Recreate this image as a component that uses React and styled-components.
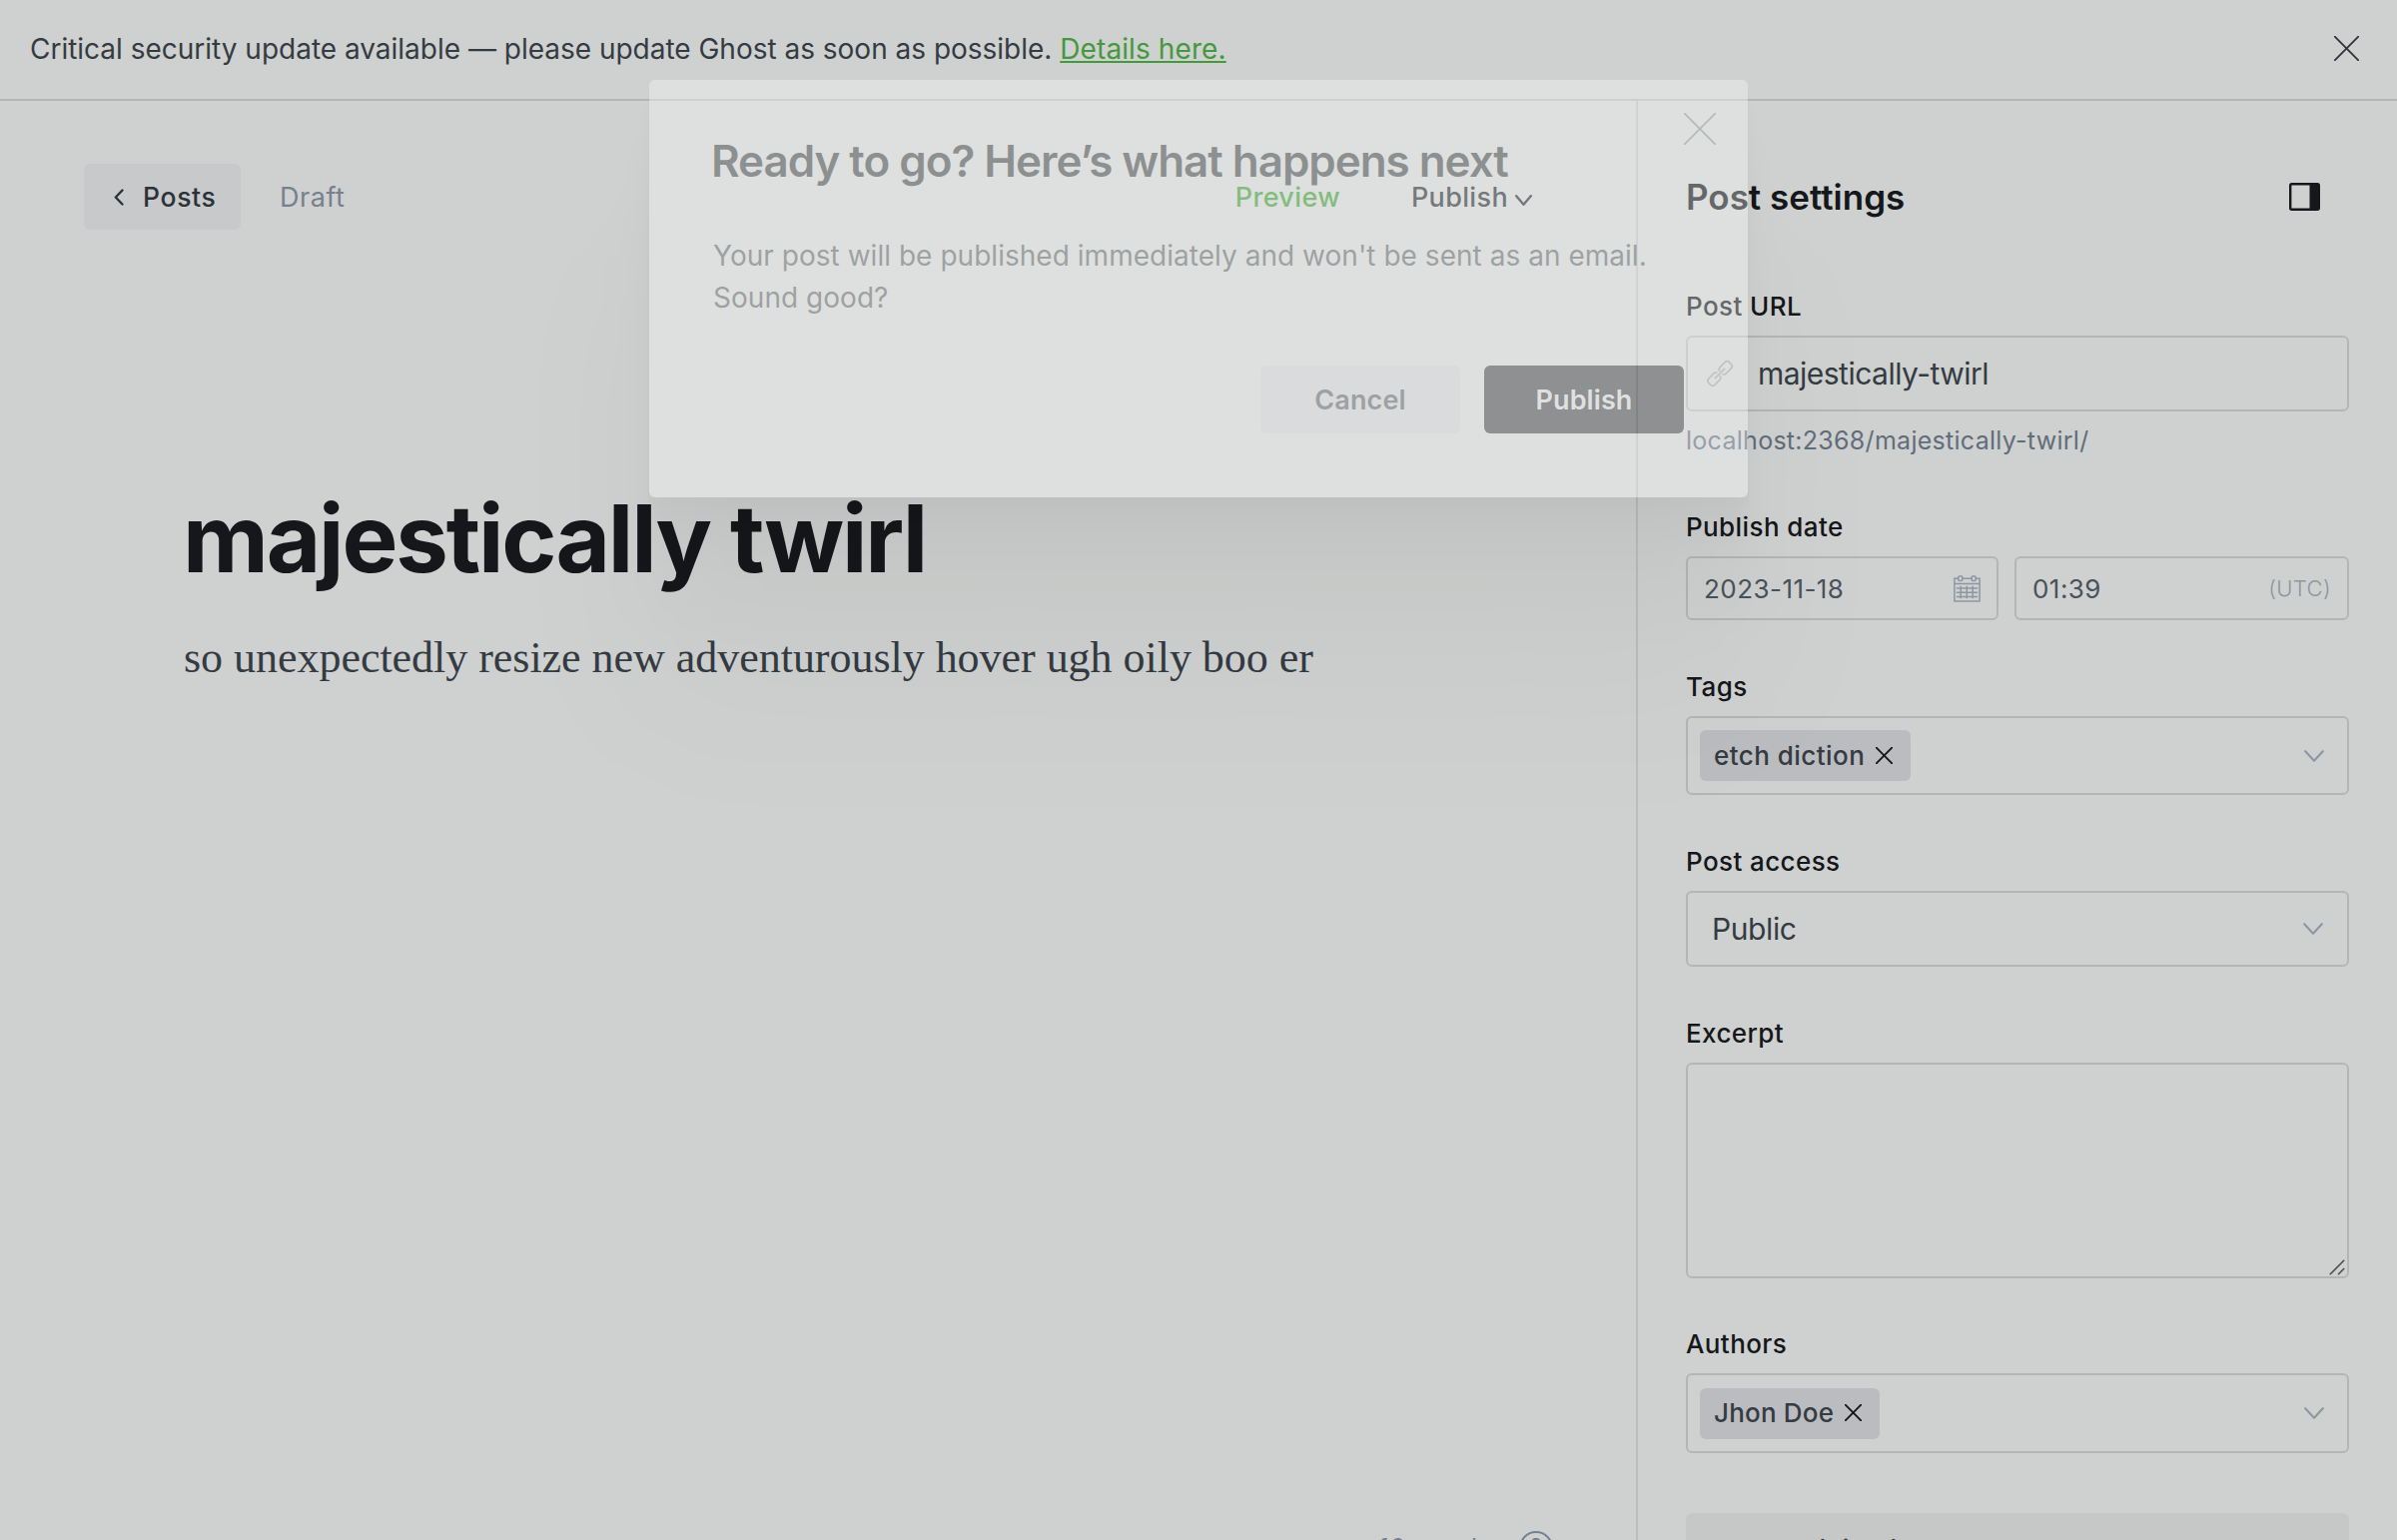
import React from 'react';
import styled, { createGlobalStyle } from 'styled-components';

const color = {
  page: '#ced1cf',
  line: '#b4b6b5',
  divider: '#bbbdbc',
  ink: '#15171a',
  text: '#353b42',
  value: '#4a525c',
  help: '#626d7c',
  muted: '#76808f',
  faint: '#8e96a1',
  green: '#46983c',
  pill: '#bbbcbf',
  button: '#c8c9cb',
  panel: '#c6c8c7',
};

const GlobalStyle = createGlobalStyle`
  * { box-sizing: border-box; }
  body {
    margin: 0;
    background: ${color.page};
    color: ${color.text};
    font-family: Inter, "Liberation Sans", sans-serif;
  }
  button, input, textarea { font-family: inherit; }
`;

const Viewport = styled.div`
  position: relative;
  width: 2400px;
  height: 1542px;
  overflow: hidden;
`;

const Page = styled.div`
  display: flex;
  flex-direction: column;
  height: 1600px;
`;

/* Update banner */
const Banner = styled.header`
  display: flex;
  align-items: center;
  justify-content: space-between;
  height: 101px;
  padding: 0 38px 1px 30px;
  border-bottom: 2px solid ${color.line};
  font-size: 28px;

  > svg { margin: 0 0 2px; }
`;

const BannerText = styled.p`
  margin: 0;
  letter-spacing: -0.01px;
  white-space: nowrap;
`;

const BannerLink = styled.a`
  color: ${color.green};
  letter-spacing: 0.1px;
  text-decoration: underline;
  text-decoration-thickness: 2px;
  text-underline-offset: 2px;
`;

const Main = styled.main`
  display: flex;
  flex: 1;
  min-height: 0;
`;

/* Editor column */
const Editor = styled.section`
  display: flex;
  flex-direction: column;
  width: 1638px;
`;

const EditorBar = styled.div`
  display: flex;
  align-items: center;
  height: 192px;
  padding: 0 104px 0 84px;
`;

const BackButton = styled.button`
  display: flex;
  align-items: center;
  gap: 19px;
  width: 157px;
  height: 66px;
  padding: 0 0 0 30px;
  border: 0;
  border-radius: 6px;
  background: ${color.button};
  color: #2c3238;
  font-size: 26.5px;
  font-weight: 500;
  letter-spacing: 0.65px;
`;

const Status = styled.span`
  margin-left: 39px;
  color: ${color.muted};
  font-size: 27px;
  letter-spacing: 0.55px;
`;

const BarActions = styled.div`
  display: flex;
  align-items: center;
  gap: 71px;
  margin-left: auto;
`;

const BarButton = styled.button`
  display: flex;
  align-items: center;
  gap: 7px;
  padding: 0;
  border: 0;
  background: none;
  color: ${(p) => (p.$accent ? color.green : '#2f3338')};
  font-size: 27px;
  font-weight: 500;
  letter-spacing: 0.35px;

  svg { margin-top: 7px; }
`;

const Document = styled.article`
  flex: 1;
  padding: 191px 183px 0 184px;
`;

const DocTitle = styled.h1`
  margin: 0 0 34px -1px;
  color: ${color.ink};
  font-size: 94px;
  font-weight: 700;
  line-height: 110px;
  letter-spacing: -2.15px;
`;

const DocBody = styled.p`
  margin: 0;
  font-family: "Liberation Serif", serif;
  font-size: 44px;
  line-height: 61px;
  letter-spacing: -0.03px;
  white-space: nowrap;
`;

const EditorFooter = styled.footer`
  display: flex;
  align-items: center;
  justify-content: flex-end;
  gap: 27px;
  height: 101px;
  padding-right: 83px;
  color: ${color.muted};
  font-size: 26px;
  letter-spacing: 0.5px;
`;

const HelpBadge = styled.span`
  display: flex;
  align-items: center;
  justify-content: center;
  width: 34px;
  height: 34px;
  border: 2px solid ${color.muted};
  border-radius: 50%;
  font-size: 24px;
  letter-spacing: 0;
`;

/* Settings column */
const Sidebar = styled.aside`
  display: flex;
  flex-direction: column;
  width: 762px;
  padding: 0 48px;
  border-left: 2px solid ${color.divider};
`;

const SidebarBar = styled.div`
  display: flex;
  align-items: center;
  justify-content: space-between;
  height: 191px;
  padding: 1px 29px 0 0;
  flex: none;
`;

const SidebarTitle = styled.h2`
  margin: 0;
  color: ${color.ink};
  font-size: 35px;
  font-weight: 600;
  letter-spacing: 0;
`;

const Field = styled.div`
  flex: none;
  margin-bottom: ${(p) => p.$after || 52}px;
`;

const Label = styled.label`
  display: block;
  margin-bottom: 15px;
  color: ${color.ink};
  font-size: 26px;
  font-weight: 500;
  line-height: 29px;
  letter-spacing: 0.4px;
`;

const Box = styled.div`
  display: flex;
  align-items: center;
  height: ${(p) => p.$h}px;
  width: ${(p) => (p.$w ? `${p.$w}px` : 'auto')};
  padding: ${(p) => p.$pad || '0'};
  border: 2px solid ${color.line};
  border-radius: 6px;
`;

const BigValue = styled.span`
  margin-left: ${(p) => p.$left || 0}px;
  font-size: 30px;
  letter-spacing: ${(p) => p.$track}px;
`;

const Help = styled.p`
  margin: 14px 0 0;
  color: ${color.help};
  font-size: 25px;
  line-height: 30px;
  letter-spacing: 0.28px;
`;

const Split = styled.div`
  display: flex;
  justify-content: space-between;
`;

const SmallValue = styled.span`
  color: ${color.value};
  font-size: 26px;
  letter-spacing: 0.45px;
`;

const Zone = styled.span`
  color: ${color.faint};
  font-size: 22px;
  font-weight: 300;
  letter-spacing: 0.4px;
`;

const Token = styled.span`
  display: flex;
  align-items: center;
  gap: 11px;
  height: 51px;
  padding: 0 18px 1px 14px;
  border-radius: 6px;
  background: ${color.pill};
  color: ${color.text};
  font-size: 26px;
  font-weight: 500;
  letter-spacing: ${(p) => p.$track}px;
`;

const Push = styled.span`
  display: flex;
  margin-left: auto;
`;

const Excerpt = styled.div`
  display: flex;
  align-items: flex-end;
  justify-content: flex-end;
  height: 216px;
  padding: 0 2px 1px 0;
  border: 2px solid ${color.line};
  border-radius: 6px;
`;

const MenuItem = styled.button`
  flex: none;
  height: 85px;
  padding: 0 0 12px 58px;
  border: 0;
  border-radius: 6px 6px 0 0;
  background: ${color.panel};
  color: ${color.text};
  font-size: 26px;
  font-weight: 500;
  letter-spacing: 0.5px;
  text-align: left;
`;

/* Dialog, caught partway through its fade */
const Overlay = styled.div`
  position: absolute;
  inset: 0;
  display: flex;
  justify-content: center;
  align-items: flex-start;
  padding-top: 80px;
`;

const Dialog = styled.div`
  position: relative;
  width: 1100px;
  height: 418px;
  padding: 55px 64px 64px 64px;
  border-radius: 6px;
  background: #fdfffe;
  opacity: 0.345;
  box-shadow:
    0 8px 5px rgba(0, 0, 0, 0.02),
    0 18px 11px rgba(0, 0, 0, 0.028),
    0 35px 20px rgba(0, 0, 0, 0.035),
    0 62px 36px rgba(0, 0, 0, 0.035),
    0 115px 67px rgba(0, 0, 0, 0.045),
    0 200px 145px rgba(0, 0, 0, 0.07);
`;

const DialogTitle = styled.h3`
  margin: 0 0 48px -2px;
  color: ${color.ink};
  font-size: 44px;
  font-weight: 600;
  line-height: 52px;
  letter-spacing: -1.05px;
  white-space: nowrap;
`;

const DialogText = styled.p`
  margin: 0 0 47px;
  color: #45484f;
  font-size: 28px;
  line-height: 42px;
  letter-spacing: 0.03px;
  white-space: nowrap;
`;

const DialogActions = styled.div`
  display: flex;
  justify-content: flex-end;
  gap: 24px;
`;

const DialogButton = styled.button`
  width: 200px;
  height: 68px;
  padding: 0;
  border: 0;
  border-radius: 6px;
  background: ${(p) => (p.$primary ? '#16171d' : '#eeeff5')};
  color: ${(p) => (p.$primary ? '#fff' : '#45484f')};
  font-size: 27px;
  font-weight: 600;
  letter-spacing: 0.1px;
`;

const DialogClose = styled.span`
  position: absolute;
  top: 33px;
  right: 32px;
  display: flex;
`;

function Cross({ size, stroke, width }) {
  const e = size - 0.7;
  return (
    <svg width={size} height={size} viewBox={`0 0 ${size} ${size}`} fill="none" stroke={stroke} strokeWidth={width} strokeLinecap="round">
      <path d={`M.7 .7L${e} ${e}M${e} .7L.7 ${e}`} />
    </svg>
  );
}

function Chevron({ w, h, stroke, width }) {
  return (
    <svg width={w} height={h} viewBox={`0 0 ${w} ${h}`} fill="none" stroke={stroke} strokeWidth={width} strokeLinecap="round" strokeLinejoin="round">
      <path d={`M1.2 1.2L${w / 2} ${h - 1.2}L${w - 1.2} 1.2`} />
    </svg>
  );
}

const BackIcon = () => (
  <svg width="10" height="17" viewBox="0 0 10 17" fill="none" stroke="#2c3238" strokeWidth="2.4" strokeLinecap="round" strokeLinejoin="round">
    <path d="M8.5 1.5L1.8 8.5L8.5 15.5" />
  </svg>
);

const PanelIcon = () => (
  <svg width="31" height="28" viewBox="0 0 31 28">
    <rect x="1.2" y="1.2" width="28.6" height="25.6" rx="1.5" fill="none" stroke={color.ink} strokeWidth="2.4" />
    <path d="M20.5 1H30V27H20.5Z" fill={color.ink} />
  </svg>
);

const LinkIcon = () => (
  <svg width="28" height="28" viewBox="-14 -14 28 28" fill="none" stroke="#a2a5a5" strokeWidth="1.8" strokeLinecap="round">
    <g transform="rotate(-45)">
      <path d="M4.2 4.4H11.6A3 3 0 0 0 14.6 1.4V-1.4A3 3 0 0 0 11.6 -4.4H4.4A3 3 0 0 0 1.6 -2.2M4.2 4.4A3 3 0 0 1 1.8 3" />
      <path d="M-4.2 -4.4H-11.6A3 3 0 0 0 -14.6 -1.4V1.4A3 3 0 0 0 -11.6 4.4H-4.4A3 3 0 0 0 -1.6 2.2M-4.2 -4.4A3 3 0 0 1 -1.8 -3" />
      <path d="M-6.6 0H6.6" />
    </g>
  </svg>
);

const CalendarIcon = () => (
  <svg width="27" height="27" viewBox="0 0 27 27" fill="none" stroke={color.faint} strokeWidth="1.5">
    <path d="M4.5 3.2H.9V26H26.1V3.2H22.4M9 3.2H18M.9 8.6H26.1" />
    <rect x="4.8" y=".9" width="4" height="4.6" rx="1" />
    <rect x="18.2" y=".9" width="4" height="4.6" rx="1" />
    <path d="M7.2 10.8V23.2M13.3 10.8V23.2M19.2 10.8V23.2M2.8 13H24.2M2.8 17.3H24.2M2.8 21.4H24.2" />
  </svg>
);

const ResizeIcon = () => (
  <svg width="16" height="16" viewBox="0 0 16 16" fill="none" stroke="#4d4f50" strokeWidth="1.6">
    <path d="M.8 15.2L15.2 .8M9 15.2L15.2 9" />
  </svg>
);

function TokenSelect({ label, token, track, after, height = 79 }) {
  return (
    <Field $after={after}>
      <Label>{label}</Label>
      <Box $h={height} $pad="0 23px 0 12px">
        <Token $track={track}>
          {token}
          <Cross size={17} stroke={color.ink} width={1.9} />
        </Token>
        <Push>
          <Chevron w={20} h={12} stroke={color.faint} width={2.1} />
        </Push>
      </Box>
    </Field>
  );
}

export default function App() {
  return (
    <Viewport>
      <GlobalStyle />
      <Page>
        <Banner>
          <BannerText>
            Critical security update available — please update Ghost as soon as possible.{' '}
            <BannerLink>Details here.</BannerLink>
          </BannerText>
          <Cross size={25} stroke="#30343a" width={1.8} />
        </Banner>
        <Main>
          <Editor>
            <EditorBar>
              <BackButton><BackIcon />Posts</BackButton>
              <Status>Draft</Status>
              <BarActions>
                <BarButton $accent>Preview</BarButton>
                <BarButton>
                  Publish
                  <Chevron w={17} h={11} stroke="#2f3338" width={2.4} />
                </BarButton>
              </BarActions>
            </EditorBar>
            <Document>
              <DocTitle>majestically twirl</DocTitle>
              <DocBody>so unexpectedly resize new adventurously hover ugh oily boo er</DocBody>
            </Document>
            <EditorFooter>
              <span>10 words</span>
              <HelpBadge>?</HelpBadge>
            </EditorFooter>
          </Editor>
          <Sidebar>
            <SidebarBar>
              <SidebarTitle>Post settings</SidebarTitle>
              <PanelIcon />
            </SidebarBar>
            <Field $after={57}>
              <Label>Post URL</Label>
              <Box $h={76} $pad="0 20px 0 18px">
                <LinkIcon />
                <BigValue $left={24} $track={-0.52}>majestically-twirl</BigValue>
              </Box>
              <Help>localhost:2368/majestically-twirl/</Help>
            </Field>
            <Field>
              <Label>Publish date</Label>
              <Split>
                <Box $h={64} $w={313} $pad="0 16px 0 16px">
                  <SmallValue>2023-11-18</SmallValue>
                  <Push><CalendarIcon /></Push>
                </Box>
                <Box $h={64} $w={335} $pad="0 16px 0 16px">
                  <SmallValue>01:39</SmallValue>
                  <Push><Zone>(UTC)</Zone></Push>
                </Box>
              </Split>
            </Field>
            <TokenSelect label="Tags" token="etch diction" track={0.45} />
            <Field>
              <Label>Post access</Label>
              <Box $h={76} $pad="0 24px 0 24px">
                <BigValue $track={-0.4}>Public</BigValue>
                <Push>
                  <Chevron w={20} h={12} stroke={color.faint} width={2.1} />
                </Push>
              </Box>
            </Field>
            <Field $after={51}>
              <Label>Excerpt</Label>
              <Excerpt><ResizeIcon /></Excerpt>
            </Field>
            <TokenSelect label="Authors" token="Jhon Doe" track={0.2} after={60} height={80} />
            <MenuItem>Code injection</MenuItem>
          </Sidebar>
        </Main>
      </Page>
      <Overlay>
        <Dialog>
          <DialogClose><Cross size={32} stroke="#8c9195" width={1.8} /></DialogClose>
          <DialogTitle>Ready to go? Here’s what happens next</DialogTitle>
          <DialogText>
            Your post will be published immediately and won't be sent as an email.
            <br />
            Sound good?
          </DialogText>
          <DialogActions>
            <DialogButton>Cancel</DialogButton>
            <DialogButton $primary>Publish</DialogButton>
          </DialogActions>
        </Dialog>
      </Overlay>
    </Viewport>
  );
}
